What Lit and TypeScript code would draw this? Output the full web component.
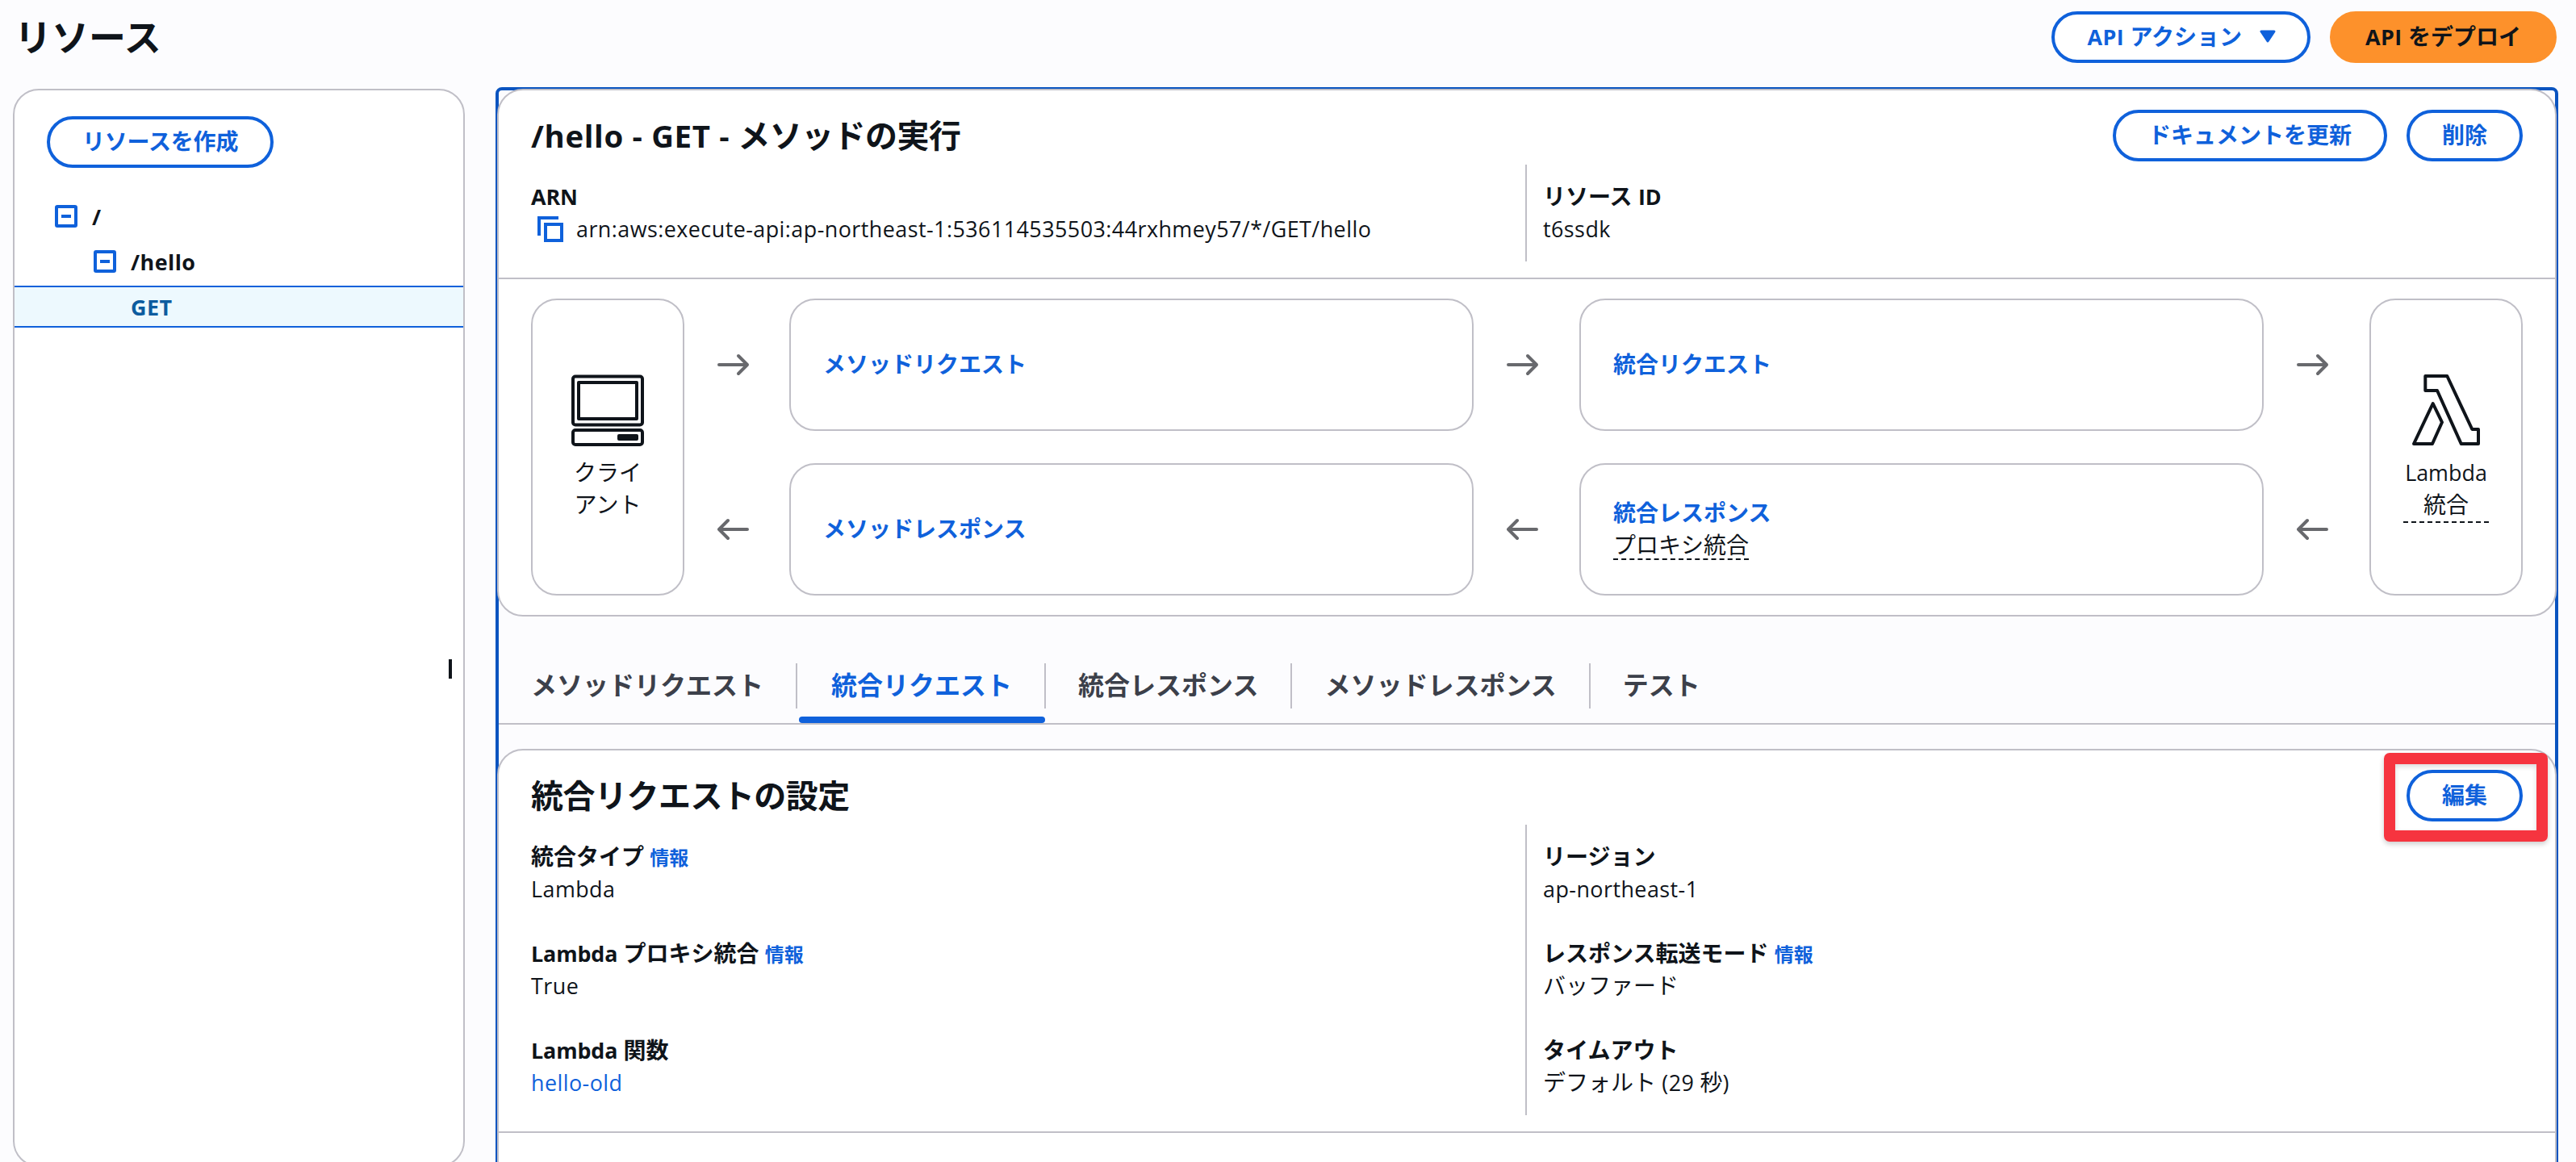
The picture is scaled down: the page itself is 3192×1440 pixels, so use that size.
import { LitElement, css, html, nothing, svg } from 'lit';
import { customElement, property, state } from 'lit/decorators.js';
import { classMap } from 'lit/directives/class-map.js';

interface Field {
  label: string;
  value: string;
  info?: boolean;
  link?: boolean;
}

const TABS = [
  'メソッドリクエスト',
  '統合リクエスト',
  '統合レスポンス',
  'メソッドレスポンス',
  'テスト',
];

const LEFT_FIELDS: Field[] = [
  { label: '統合タイプ', value: 'Lambda', info: true },
  { label: 'Lambda プロキシ統合', value: 'True', info: true },
  { label: 'Lambda 関数', value: 'hello-old', link: true },
];

const RIGHT_FIELDS: Field[] = [
  { label: 'リージョン', value: 'ap-northeast-1' },
  { label: 'レスポンス転送モード', value: 'バッファード', info: true },
  { label: 'タイムアウト', value: 'デフォルト (29 秒)' },
];

// Latin runs are set slightly smaller than the Japanese around them
const mixed = (text: string) =>
  text
    .split(/([\x21-\x7e]+(?: [\x21-\x7e]+)*)/)
    .map(part =>
      /[\x21-\x7e]/.test(part) ? html`<span class="latin">${part}</span>` : part
    );

const latinStyles = css`
  .latin {
    font-size: 0.96em;
    line-height: 0;
    letter-spacing: 0.017em;
  }
`;

@customElement('console-button')
export class ConsoleButton extends LitElement {
  static styles = [
    latinStyles,
    css`
      :host {
        display: block;
      }
      button {
        display: flex;
        align-items: center;
        gap: 22px;
        box-sizing: border-box;
        height: 64px;
        margin: 0;
        padding: 0 40px 2px;
        border: 4px solid #0f61db;
        border-radius: 32px;
        background: #fff;
        color: #0f61db;
        font: inherit;
        font-weight: 700;
        letter-spacing: inherit;
        white-space: nowrap;
      }
      .primary {
        border-color: #fd912b;
        background: #fd912b;
        color: #0f141a;
      }
      .caret {
        width: 20px;
        height: 16px;
        margin-right: -1px;
        fill: currentColor;
        stroke: currentColor;
        stroke-width: 3;
        stroke-linejoin: round;
      }
    `,
  ];

  @property() label = '';

  @property({ type: Boolean }) primary = false;

  @property({ type: Boolean }) dropdown = false;

  render() {
    return html`
      <button class=${classMap({ primary: this.primary })}>
        <span>${mixed(this.label)}</span>
        ${this.dropdown
          ? html`<svg class="caret" viewBox="0 0 20 16">
              <path d="M2 2h16l-8 12z" />
            </svg>`
          : nothing}
      </button>
    `;
  }
}

@customElement('app-root')
export class AppRoot extends LitElement {
  static styles = [
    latinStyles,
    css`
      :host {
        display: block;
        box-sizing: border-box;
        height: 1440px;
        overflow: hidden;
        background: #fcfcfe;
        color: #0f141a;
        font-family: 'Open Sans', 'Noto Sans CJK JP', sans-serif;
        font-size: 28px;
        line-height: 40px;
      }
      h1,
      h2 {
        margin: 0;
        font-weight: 700;
      }
      h1 {
        padding-bottom: 2px;
        font-size: 46px;
        line-height: 60px;
      }
      h2 {
        padding-top: 8px;
        font-size: 40px;
        line-height: 47px;
        letter-spacing: -0.013em;
      }
      a {
        color: #0f61db;
        text-decoration: none;
      }
      .page-header {
        display: flex;
        justify-content: space-between;
        align-items: center;
        height: 64px;
        padding: 14px 24px 30px 18px;
      }
      .actions {
        display: flex;
        gap: 24px;
      }
      .body {
        display: flex;
        align-items: flex-start;
        gap: 38px;
        padding-left: 16px;
      }
      .card {
        box-sizing: border-box;
        border: 2px solid #c0bfc7;
        border-radius: 32px;
        background: #fff;
      }

      .sidebar {
        position: relative;
        width: 560px;
        height: 1336px;
        margin-top: 2px;
        padding-top: 32px;
      }
      .sidebar console-button {
        width: max-content;
        margin-left: 40px;
        letter-spacing: -0.2px;
      }
      .tree {
        margin-top: 32px;
        font-weight: 700;
      }
      .node {
        display: flex;
        align-items: center;
        gap: 18px;
        height: 56px;
        padding-left: 50px;
      }
      .node span {
        padding-bottom: 1px;
      }
      .node.child {
        padding-left: 98px;
      }
      .node.selected {
        box-sizing: border-box;
        height: 52px;
        margin-top: 2px;
        padding-left: 144px;
        border: solid #0f61db;
        border-width: 2px 0;
        background: #edf9fe;
        color: #0c5c9f;
      }
      .toggle {
        width: 28px;
        height: 28px;
        fill: none;
        stroke: #0f61db;
        stroke-width: 4;
      }
      .resizer {
        position: absolute;
        top: 705px;
        right: 14px;
        width: 4px;
        height: 24px;
        background: #0f141a;
      }

      .main {
        box-sizing: border-box;
        width: 2556px;
        height: 1400px;
        border: 4px solid #0a54c0;
        border-radius: 8px;
      }
      .main .card {
        position: relative;
        margin: -2px -2px 0;
      }
      .card-header {
        display: flex;
        justify-content: space-between;
        align-items: flex-start;
        padding: 24px 40px 4px;
      }
      .columns {
        display: grid;
        grid-template-columns: 1fr 1fr;
        margin: 0 40px 20px;
      }
      .column {
        display: flex;
        flex-direction: column;
        gap: 40px;
        padding: 20px 0;
      }
      .column + .column {
        margin-left: -2px;
        padding-left: 20px;
        border-left: 2px solid #c0bfc7;
      }
      .label,
      .value {
        height: 40px;
        line-height: 38px;
      }
      .label {
        font-weight: 700;
      }
      .label .latin {
        letter-spacing: -0.005em;
      }
      .value {
        display: flex;
      }
      .info {
        font-size: 24px;
        line-height: 0;
        font-weight: 600;
      }
      .copy {
        width: 32px;
        height: 32px;
        margin: 4px 16px 0 8px;
        fill: none;
        stroke: #0f61db;
        stroke-width: 4;
      }
      .rule {
        height: 2px;
        background: #c0bfc7;
      }

      .flow {
        display: grid;
        grid-template-columns: 190px 130px 848px 131px 848px 131px 190px;
        grid-template-rows: 164px 164px;
        row-gap: 40px;
        padding: 24px 40px;
      }
      .endpoint {
        grid-row: span 2;
        display: flex;
        flex-direction: column;
        align-items: center;
        padding: 90px 40px 0;
        text-align: center;
      }
      .endpoint svg {
        flex: none;
        width: 96px;
        height: 96px;
        margin-bottom: 7px;
        fill: none;
        stroke: #0f141a;
        stroke-width: 4;
        stroke-linejoin: round;
      }
      .endpoint .latin {
        letter-spacing: 0;
      }
      .flow .card {
        margin: 0;
      }
      .step {
        display: flex;
        flex-direction: column;
        justify-content: center;
        align-items: flex-start;
        padding: 0 40px 2px;
        font-weight: 700;
      }
      .hint {
        box-sizing: border-box;
        height: 39px;
        margin-bottom: 1px;
        border-bottom: 2px dashed #0f141a;
        font-weight: 400;
      }
      .endpoint .hint {
        align-self: stretch;
        height: 43px;
      }
      .arrow {
        align-self: center;
        width: 40px;
        height: 28px;
        margin-left: 41px;
        fill: none;
        stroke: #68696d;
        stroke-width: 4;
        stroke-linecap: round;
        stroke-linejoin: round;
      }

      .tabs {
        display: flex;
        align-items: flex-start;
        height: 74px;
        margin: 58px 0 32px;
        border-bottom: 2px solid #c0bfc7;
        font-size: 32px;
        font-weight: 700;
        color: #3c404a;
      }
      .tab .text {
        padding: 0 40px 2px;
        border-right: 2px solid #c0bfc7;
        line-height: 54px;
      }
      .tab:last-child .text {
        border-right: none;
      }
      .tab.active {
        margin-left: 2px;
        color: #0f61db;
      }
      .tab.active::after {
        content: '';
        display: block;
        height: 8px;
        margin: 10px 1px 0 0;
        border-radius: 4px;
        background: #0f61db;
      }
      .settings {
        height: 560px;
      }
      .edit {
        position: relative;
      }
      .highlight {
        position: absolute;
        top: -21px;
        left: -28px;
        box-sizing: border-box;
        width: 203px;
        height: 110px;
        border: 14px solid #f6343f;
        border-radius: 7px;
        box-shadow: 0 3px 6px rgba(0, 0, 0, 0.2),
          inset 0 3px 6px rgba(0, 0, 0, 0.15);
      }
    `,
  ];

  @state() private activeTab = 1;

  private toggle() {
    return html`<svg class="toggle" viewBox="0 0 28 28">
      <rect x="2" y="2" width="24" height="24" rx="1" />
      <path d="M8 14h12" />
    </svg>`;
  }

  private arrow(back = false) {
    return html`<svg class="arrow" viewBox="0 0 40 28">
      ${back
        ? svg`<path d="M37 14H2M13 3L2 14l11 11" />`
        : svg`<path d="M2 14h35M26 3l11 11-11 11" />`}
    </svg>`;
  }

  private step(label: string, hint?: string) {
    return html`<div class="card step">
      <a href="#">${label}</a>
      ${hint ? html`<span class="hint">${hint}</span>` : nothing}
    </div>`;
  }

  private field(field: Field) {
    return html`<div>
      <div class="label">
        ${mixed(field.label)}
        ${field.info ? html`<a class="info" href="#">情報</a>` : nothing}
      </div>
      <div class="value">
        ${field.link
          ? html`<a href="#">${mixed(field.value)}</a>`
          : html`<span>${mixed(field.value)}</span>`}
      </div>
    </div>`;
  }

  private sidebar() {
    return html`<aside class="card sidebar">
      <console-button label="リソースを作成"></console-button>
      <div class="tree">
        <div class="node">${this.toggle()}<span>${mixed('/')}</span></div>
        <div class="node child">
          ${this.toggle()}<span>${mixed('/hello')}</span>
        </div>
        <div class="node selected"><span>${mixed('GET')}</span></div>
      </div>
      <div class="resizer"></div>
    </aside>`;
  }

  private methodCard() {
    return html`<section class="card">
      <div class="card-header">
        <h2>${mixed('/hello - GET - メソッドの実行')}</h2>
        <div class="actions">
          <console-button label="ドキュメントを更新"></console-button>
          <console-button label="削除"></console-button>
        </div>
      </div>
      <div class="columns">
        <div class="column">
          <div>
            <div class="label">${mixed('ARN')}</div>
            <div class="value">
              <svg class="copy" viewBox="0 0 32 32">
                <path d="M2 24V2h24" />
                <rect x="10" y="10" width="20" height="20" />
              </svg>
              <span
                >${mixed(
                  'arn:aws:execute-api:ap-northeast-1:536114535503:44rxhmey57/*/GET/hello'
                )}</span
              >
            </div>
          </div>
        </div>
        <div class="column">
          ${this.field({ label: 'リソース ID', value: 't6ssdk' })}
        </div>
      </div>
      <div class="rule"></div>
      <div class="flow">
        <div class="card endpoint">
          <svg viewBox="0 0 96 96">
            <rect x="5" y="4.5" width="86" height="60" rx="3" />
            <rect x="12" y="12" width="72" height="45" />
            <rect x="5" y="71" width="86" height="18" rx="3" />
            <path d="M62 78h22v4H62z" />
          </svg>
          <span>クライ<br />アント</span>
        </div>
        ${this.arrow()} ${this.step('メソッドリクエスト')} ${this.arrow()}
        ${this.step('統合リクエスト')} ${this.arrow()}
        <div class="card endpoint">
          <svg viewBox="0 0 96 96">
            <path
              d="M22.3 4h27l31 66H88v18H66.7L37 22H22.3zM31.7 38L43 61.3 31 88H8z"
            />
          </svg>
          <span>${mixed('Lambda')}</span>
          <span class="hint">統合</span>
        </div>
        ${this.arrow(true)} ${this.step('メソッドレスポンス')}
        ${this.arrow(true)} ${this.step('統合レスポンス', 'プロキシ統合')}
        ${this.arrow(true)}
      </div>
    </section>`;
  }

  private tabs() {
    return html`<nav class="tabs">
      ${TABS.map(
        (label, i) => html`<div
          class=${classMap({ tab: true, active: i === this.activeTab })}
          @click=${() => {
            this.activeTab = i;
          }}
        >
          <div class="text">${label}</div>
        </div>`
      )}
    </nav>`;
  }

  private settingsCard() {
    return html`<section class="card settings">
      <div class="card-header">
        <h2>統合リクエストの設定</h2>
        <div class="edit">
          <console-button label="編集"></console-button>
          <div class="highlight"></div>
        </div>
      </div>
      <div class="columns">
        <div class="column">${LEFT_FIELDS.map(f => this.field(f))}</div>
        <div class="column">${RIGHT_FIELDS.map(f => this.field(f))}</div>
      </div>
      <div class="rule"></div>
    </section>`;
  }

  render() {
    return html`
      <header class="page-header">
        <h1>リソース</h1>
        <div class="actions">
          <console-button label="API アクション" dropdown></console-button>
          <console-button label="API をデプロイ" primary></console-button>
        </div>
      </header>
      <div class="body">
        ${this.sidebar()}
        <main class="main">
          ${this.methodCard()} ${this.tabs()} ${this.settingsCard()}
        </main>
      </div>
    `;
  }
}
